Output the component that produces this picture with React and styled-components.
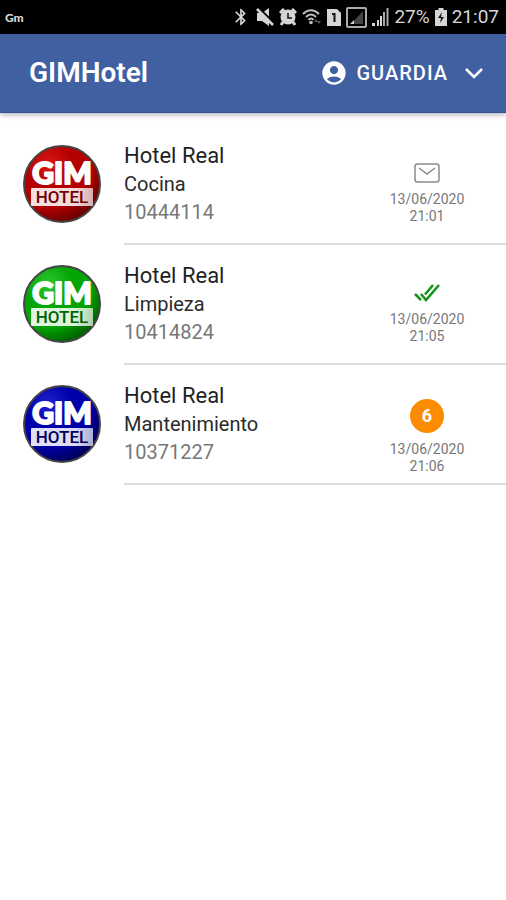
import React from 'react'
import styled, { createGlobalStyle } from 'styled-components'
import { MdAccountCircle, MdBluetooth } from 'react-icons/md'

const GlobalStyle = createGlobalStyle`
  * {
    box-sizing: border-box;
  }
  body {
    margin: 0;
    background: #fff;
    font-family: Roboto, 'Noto Sans', sans-serif;
  }
  h1, h2, p, ul {
    margin: 0;
    padding: 0;
  }
`

const StatusBar = styled.div`
  display: flex;
  align-items: center;
  justify-content: space-between;
  height: 34px;
  padding: 0 7px 0 5px;
  background: #000;
  color: #d6d6d6;
  svg {
    display: block;
    flex: none;
  }
`

const Carrier = styled.span`
  font-family: Lato, sans-serif;
  font-size: 12px;
  font-weight: 900;
`

const StatusIcons = styled.div`
  display: flex;
  align-items: center;
  gap: 5px;
`

const StatusText = styled.span`
  font-size: 19px;
  line-height: 24px;
`

const Header = styled.header`
  display: flex;
  align-items: center;
  justify-content: space-between;
  height: 79px;
  padding: 0 22px 0 29px;
  background: #4160a2;
  border-bottom: 1px solid #35528f;
  box-shadow: 0 2px 5px rgba(40, 50, 90, 0.35);
  color: #fff;
`

const Title = styled.h1`
  font-size: 28px;
  font-weight: 600;
  line-height: 32px;
`

const UserButton = styled.button`
  display: flex;
  align-items: center;
  padding: 0;
  border: 0;
  background: none;
  color: inherit;
  font-family: inherit;
  font-size: 20px;
  font-weight: 500;
  line-height: 24px;
  letter-spacing: 1px;
  cursor: pointer;
  svg {
    display: block;
  }
  span {
    margin: 0 16px 0 8px;
  }
`

const List = styled.ul`
  padding-top: 12px;
  list-style: none;
`

const Item = styled.li`
  display: flex;
  height: 120px;
  padding-left: 22px;
`

const Logo = styled.svg`
  flex: none;
  display: block;
  width: 80px;
  height: 80px;
  margin: 19px 22px 0 0;
`

const Content = styled.div`
  display: flex;
  flex: 1;
  justify-content: space-between;
  padding-right: 29px;
  border-bottom: 2px solid #dedede;
`

const Info = styled.div`
  padding-top: 17px;
  line-height: 28px;
  h2 {
    font-size: 22px;
    font-weight: 400;
    line-height: 28px;
    color: #1f1f1f;
  }
  p {
    font-size: 20px;
    color: #2b2b2b;
  }
  .code {
    color: #777;
  }
`

const State = styled.div`
  display: flex;
  flex-direction: column;
  align-items: center;
  width: 100px;
  padding-top: 34px;
  time {
    font-size: 14px;
    line-height: 17px;
    color: #777;
    text-align: center;
  }
`

const IconSlot = styled.div`
  display: flex;
  align-items: center;
  height: 28px;
  margin-bottom: 4px;
`

const Badge = styled.span`
  width: 34px;
  height: 34px;
  margin-bottom: 8px;
  border-radius: 50%;
  background: #fb8c00;
  color: #fff;
  font-size: 18px;
  font-weight: 700;
  line-height: 34px;
  text-align: center;
`

const hotels = [
  { code: '10444114', name: 'Hotel Real', area: 'Cocina', date: '13/06/2020', hour: '21:01', state: 'mail', light: '#d81818', main: '#b40000', dark: '#6d0000' },
  { code: '10414824', name: 'Hotel Real', area: 'Limpieza', date: '13/06/2020', hour: '21:05', state: 'done', light: '#2fc62f', main: '#04a504', dark: '#006400' },
  { code: '10371227', name: 'Hotel Real', area: 'Mantenimiento', date: '13/06/2020', hour: '21:06', state: 'count', count: 6, light: '#2222d0', main: '#0000a8', dark: '#00005c' },
]

function HotelLogo({ item }) {
  const id = 'ball' + item.code
  return (
    <Logo viewBox="0 0 80 80">
      <defs>
        <radialGradient id={id} cx="0.32" cy="0.24" r="0.78">
          <stop offset="0" stopColor={item.light} />
          <stop offset="0.4" stopColor={item.main} />
          <stop offset="0.72" stopColor={item.main} />
          <stop offset="1" stopColor={item.dark} />
        </radialGradient>
        <linearGradient id={id + 'bar'}>
          <stop offset="0" stopColor="#fff" stopOpacity="0.88" />
          <stop offset="0.7" stopColor="#fff" stopOpacity="0.86" />
          <stop offset="1" stopColor="#fff" stopOpacity="0.68" />
        </linearGradient>
      </defs>
      <circle cx="40" cy="40" r="38" fill={`url(#${id})`} stroke="#454545" strokeWidth="2" />
      <text x="40" y="40" textAnchor="middle" fontFamily="Lato, sans-serif" fontWeight="900" fontSize="30" fill="#fff" stroke="#fff" strokeWidth="2" strokeLinejoin="round">GIM</text>
      <rect x="9" y="44" width="62" height="18" rx="1" fill={`url(#${id}bar)`} />
      <text x="40" y="59" textAnchor="middle" fontFamily="Roboto, sans-serif" fontWeight="500" fontSize="17" fill={item.dark}>HOTEL</text>
    </Logo>
  )
}

function MuteIcon() {
  return (
    <svg width="18" height="18" viewBox="0 0 18 18">
      <path d="M1 5h5l7-5v18l-7-5H1z" fill="#d6d6d6" />
      <path d="M3 0l15 15" stroke="#000" strokeWidth="2" />
      <path d="M1 1l16 16" stroke="#d6d6d6" strokeWidth="2.500" />
    </svg>
  )
}

function AlarmIcon() {
  return (
    <svg width="18" height="18" viewBox="0 0 18 18">
      <circle cx="9" cy="9" r="7.500" fill="#d6d6d6" />
      <path d="M1 5l4-4M17 5l-4-4M4 14l-2 3M14 14l2 3" stroke="#d6d6d6" strokeWidth="3" />
      <path d="M9 5v5h4" fill="none" stroke="#111" strokeWidth="1.500" />
    </svg>
  )
}

function WifiIcon() {
  return (
    <svg width="20" height="18" viewBox="0 0 20 18">
      <g fill="none" stroke="#bdbdbd" strokeWidth="2">
        <path d="M1 6c5-5 11-5 16 0M4 9c3-3.500 7-3.500 10 0M6.500 12c1.500-2 3.500-2 5 0" />
      </g>
      <circle cx="9" cy="14.500" r="1.800" fill="#bdbdbd" />
      <path d="M12 14l2-3 2 3zM15 13h4l-2 3z" fill="#555" />
    </svg>
  )
}

function SimIcon() {
  return (
    <svg width="14" height="17" viewBox="0 0 14 17">
      <path d="M0 0h10l4 4v13H0z" fill="#d6d6d6" />
      <path d="M5 5h2.500v8" fill="none" stroke="#111" strokeWidth="2" />
    </svg>
  )
}

function BoxedSignalIcon() {
  return (
    <svg width="21" height="21" viewBox="0 0 21 21">
      <rect x="1" y="1" width="19" height="19" rx="1" fill="none" stroke="#aaa" strokeWidth="2" />
      <path d="M17 4v13H5z" fill="#444" />
      <path d="M8 13v4H4z" fill="#ccc" />
    </svg>
  )
}

function SignalIcon() {
  return (
    <svg width="17" height="18" viewBox="0 0 17 18">
      <path d="M0 15h3v3H0zM5 12h2v6H5zM8 8h2v10H8z" fill="#d6d6d6" />
      <path d="M11 4h2v14h-2zM14.500 0h2v18h-2z" fill="#a8a8a8" />
    </svg>
  )
}

function BatteryIcon() {
  return (
    <svg width="12" height="18" viewBox="0 0 12 18">
      <path d="M3.500 0h5v2H12v16H0V2h3.500z" fill="#d6d6d6" />
      <path d="M7 4L3 10h3l-1 5 4-6H6z" fill="#111" />
    </svg>
  )
}

function MailIcon() {
  return (
    <svg width="26" height="20" viewBox="0 0 26 20" fill="none" stroke="#8a8a8a" strokeWidth="1.500">
      <rect x="1" y="1" width="24" height="18" rx="2.500" />
      <path d="M5 5l8 6 8-6" />
    </svg>
  )
}

function DoneIcon() {
  return (
    <svg width="26" height="18" viewBox="0 0 26 18" fill="none" stroke="#159215" strokeWidth="2.500">
      <path d="M1 10l6 6M11 10.500L19 1M7 10l5 6L25 1" />
    </svg>
  )
}

function HotelItem({ item }) {
  return (
    <Item>
      <HotelLogo item={item} />
      <Content>
        <Info>
          <h2>{item.name}</h2>
          <p>{item.area}</p>
          <p className="code">{item.code}</p>
        </Info>
        <State>
          {item.state === 'count' && <Badge>{item.count}</Badge>}
          {item.state === 'mail' && <IconSlot><MailIcon /></IconSlot>}
          {item.state === 'done' && <IconSlot><DoneIcon /></IconSlot>}
          <time>{item.date}<br />{item.hour}</time>
        </State>
      </Content>
    </Item>
  )
}

export default function App() {
  return (
    <>
      <GlobalStyle />
      <StatusBar>
        <Carrier>Gm</Carrier>
        <StatusIcons>
          <MdBluetooth size={20} />
          <MuteIcon />
          <AlarmIcon />
          <WifiIcon />
          <SimIcon />
          <BoxedSignalIcon />
          <SignalIcon />
          <StatusText>27%</StatusText>
          <BatteryIcon />
          <StatusText>21:07</StatusText>
        </StatusIcons>
      </StatusBar>
      <Header>
        <Title>GIMHotel</Title>
        <UserButton type="button">
          <MdAccountCircle size={28} />
          <span>GUARDIA</span>
          <svg width="20" height="12" viewBox="0 0 20 12" fill="none" stroke="#fff" strokeWidth="2.500">
            <path d="M2 2l8 8 8-8" />
          </svg>
        </UserButton>
      </Header>
      <List>
        {hotels.map(item => <HotelItem key={item.code} item={item} />)}
      </List>
    </>
  )
}
